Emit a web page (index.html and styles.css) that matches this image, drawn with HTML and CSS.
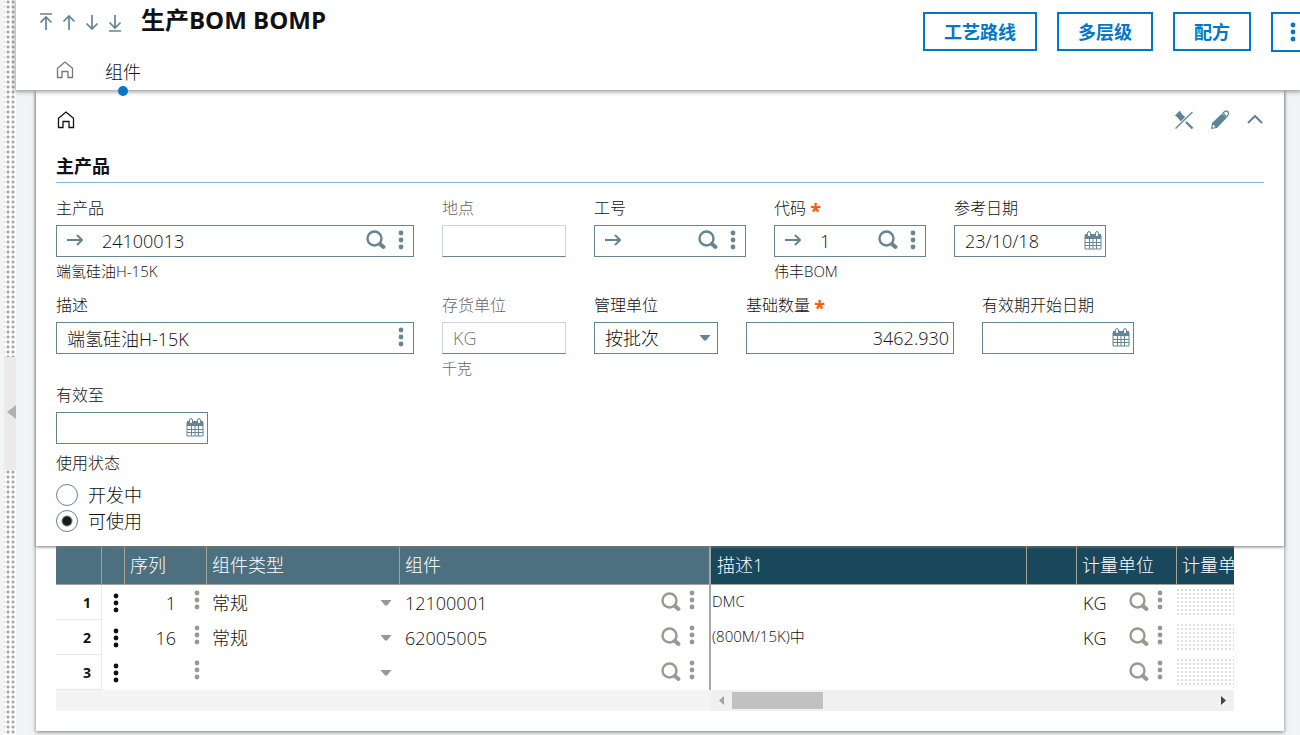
FILE: index.html
```html
<!DOCTYPE html>
<html lang="zh-CN">
<head>
<meta charset="utf-8">
<title>生产BOM BOMP</title>
<link rel="stylesheet" href="styles.css">
</head>
<body>
<svg class="sprite" aria-hidden="true">
  <symbol id="dots" viewBox="0 0 6 20"><circle cx="3" cy="3" r="2.4"/><circle cx="3" cy="10" r="2.4"/><circle cx="3" cy="17" r="2.4"/></symbol>
  <symbol id="search" viewBox="0 0 20 20"><circle cx="8.5" cy="8.5" r="7" fill="none" stroke="currentColor" stroke-width="2.4"/><path d="M14 14l3.4 3" stroke="currentColor" stroke-width="4" stroke-linecap="round"/></symbol>
  <symbol id="go" viewBox="0 0 16 12"><path d="M0 6h15M10 1l5 5-5 5" fill="none" stroke="currentColor" stroke-width="2"/></symbol>
  <symbol id="calendar" viewBox="0 0 18 19"><path d="M1 4.500h16v13.500H1z" fill="none" stroke="currentColor"/><path d="M1 3h16v5H1z"/><path d="M1 11.500h16M1 14.500h16M5.500 8v10M9 8v10M12.500 8v10" stroke="currentColor" fill="none"/><rect x="3.500" y=".6" width="3" height="5" rx="1.500" fill="#fff" stroke="currentColor"/><rect x="11.500" y=".6" width="3" height="5" rx="1.500" fill="#fff" stroke="currentColor"/></symbol>
  <symbol id="home" viewBox="0 0 18 18"><path d="M1.500 7.200L9 1l7.500 6.200v9.300h-4.500v-6H6v6H1.500z" fill="none" stroke="currentColor" stroke-width="1.300"/></symbol>
  <symbol id="caret" viewBox="0 0 12 6"><path d="M.5 0h11L7 5.500H5z"/></symbol>
</svg>
<div class="app">
  <aside class="splitter"><button class="collapse" aria-label="收起"><svg width="9" height="14" viewBox="0 0 9 14"><path d="M9 0v14L0 7z"/></svg></button></aside>
  <main class="main">
    <header class="header">
      <div class="heading">
        <nav class="pager">
          <button aria-label="首条"><svg width="14" height="20" viewBox="0 0 14 20"><path d="M1 2h12M7 18V5M1.500 10.500L7 5l5.500 5.500"/></svg></button>
          <button aria-label="上一条"><svg width="14" height="20" viewBox="0 0 14 20"><path d="M7 18V4M1.500 9.500L7 4l5.500 5.500"/></svg></button>
          <button aria-label="下一条"><svg width="14" height="20" viewBox="0 0 14 20"><path d="M7 3v14M1.500 11.500L7 17l5.500-5.500"/></svg></button>
          <button aria-label="末条"><svg width="14" height="20" viewBox="0 0 14 20"><path d="M1 19h12M7 3v13M1.500 10.500L7 16l5.500-5.500"/></svg></button>
        </nav>
        <h1>生产BOM BOMP</h1>
      </div>
      <div class="actions">
        <button>工艺路线</button><button>多层级</button><button>配方</button>
        <button class="more" aria-label="更多"><svg class="dots"><use href="#dots"/></svg></button>
      </div>
      <nav class="tabs">
        <a class="tab home" href="#" aria-label="主页"><svg width="18" height="18"><use href="#home"/></svg></a>
        <a class="tab active" href="#">组件</a>
      </nav>
    </header>
    <section class="card">
      <div class="panel">
        <div class="panel-top">
          <svg width="18" height="18"><use href="#home"/></svg>
          <div class="tools">
            <button aria-label="取消固定"><svg width="20" height="20" viewBox="0 0 20 20"><path d="M1 5.500L6 .5l1 2.500 5 5-1 3-3 2-4.500-5.500z"/><path d="M12 12l6.500 6.500" stroke="currentColor" stroke-width="2.4"/><path d="M1.500 18.500L18.500 2" stroke="#fff" stroke-width="3"/><path d="M1.500 18.500L18.500 2" stroke="currentColor" stroke-width="1.300"/></svg></button>
            <button aria-label="编辑"><svg width="20" height="20" viewBox="0 0 20 20"><path d="M1 19l1-6L12 3.500l4.500 4.500L7 18z"/><path d="M3 14.500L5.500 17l-3 .7z" fill="#fff"/><path d="M13 3l2-1.700q1.500-.8 2.800.5 1.200 1.300.4 2.700L16.500 7z" fill="#fff" stroke="currentColor" stroke-width="1.300"/></svg></button>
            <button aria-label="折叠"><svg width="18" height="20" viewBox="0 0 18 20"><path d="M2 13l7-7 7 7" fill="none" stroke="currentColor" stroke-width="2"/></svg></button>
          </div>
        </div>
        <h2>主产品</h2>
        <div class="row first">
          <div class="field w-xl"><label for="product">主产品</label>
            <div class="box"><button class="go" aria-label="跳转"><svg><use href="#go"/></svg></button><input id="product" value="24100013"><button aria-label="查找"><svg class="search"><use href="#search"/></svg></button><button aria-label="菜单"><svg class="dots"><use href="#dots"/></svg></button></div>
            <p class="hint">端氢硅油H-15K</p></div>
          <div class="field w-s off"><label for="site">地点</label><div class="box"><input id="site" disabled></div></div>
          <div class="field w-m"><label for="job">工号</label>
            <div class="box"><button class="go" aria-label="跳转"><svg><use href="#go"/></svg></button><input id="job"><button aria-label="查找"><svg class="search"><use href="#search"/></svg></button><button aria-label="菜单"><svg class="dots"><use href="#dots"/></svg></button></div></div>
          <div class="field w-m"><label for="code">代码 <b>*</b></label>
            <div class="box"><button class="go" aria-label="跳转"><svg><use href="#go"/></svg></button><input id="code" value="1"><button aria-label="查找"><svg class="search"><use href="#search"/></svg></button><button aria-label="菜单"><svg class="dots"><use href="#dots"/></svg></button></div>
            <p class="hint">伟丰BOM</p></div>
          <div class="field w-m"><label for="refdate">参考日期</label><div class="box date"><input id="refdate" value="23/10/18"><button aria-label="日历"><svg class="cal"><use href="#calendar"/></svg></button></div></div>
        </div>
        <div class="row second">
          <div class="field w-xl"><label for="desc">描述</label><div class="box"><input id="desc" value="端氢硅油H-15K"><button aria-label="菜单"><svg class="dots"><use href="#dots"/></svg></button></div></div>
          <div class="field w-s off"><label for="unit">存货单位</label><div class="box"><input id="unit" value="KG" disabled></div><p class="hint">千克</p></div>
          <div class="field w-s"><label for="manage">管理单位</label><div class="box select"><select id="manage"><option>按批次</option></select><svg class="caret"><use href="#caret"/></svg></div></div>
          <div class="field w-l"><label for="qty">基础数量 <b>*</b></label><div class="box"><input id="qty" class="num" value="3462.930"></div></div>
          <div class="field w-m"><label for="start">有效期开始日期</label><div class="box date"><input id="start"><button aria-label="日历"><svg class="cal"><use href="#calendar"/></svg></button></div></div>
        </div>
        <div class="row">
          <div class="field w-m"><label for="end">有效至</label><div class="box date"><input id="end"><button aria-label="日历"><svg class="cal"><use href="#calendar"/></svg></button></div></div>
        </div>
        <fieldset class="status">
          <legend>使用状态</legend>
          <label><input type="radio" name="status">开发中</label>
          <label><input type="radio" name="status" checked>可使用</label>
        </fieldset>
      </div>
      <div class="grid">
        <table>
          <colgroup><col class="c-no"><col class="c-menu"><col class="c-seq"><col class="c-type"><col class="c-comp"><col><col class="c-gap"><col class="c-unit"><col class="c-last"></colgroup>
          <thead><tr><th></th><th></th><th>序列</th><th>组件类型</th><th class="pin">组件</th><th class="dark">描述1</th><th class="dark"></th><th class="dark">计量单位</th><th class="dark">计量单位</th></tr></thead>
          <tbody>
            <tr><td class="no">1</td><td class="menu"><svg class="dots"><use href="#dots"/></svg></td><td><div class="cell seq"><span>1</span><svg class="dots"><use href="#dots"/></svg></div></td><td><div class="cell type"><span>常规</span><svg class="caret"><use href="#caret"/></svg></div></td><td class="pin"><div class="cell"><span>12100001</span><svg class="search"><use href="#search"/></svg><svg class="dots"><use href="#dots"/></svg></div></td><td class="desc">DMC</td><td></td><td><div class="cell unit"><span>KG</span><svg class="search"><use href="#search"/></svg><svg class="dots"><use href="#dots"/></svg></div></td><td><div class="locked">1</div></td></tr>
            <tr><td class="no">2</td><td class="menu"><svg class="dots"><use href="#dots"/></svg></td><td><div class="cell seq"><span>16</span><svg class="dots"><use href="#dots"/></svg></div></td><td><div class="cell type"><span>常规</span><svg class="caret"><use href="#caret"/></svg></div></td><td class="pin"><div class="cell"><span>62005005</span><svg class="search"><use href="#search"/></svg><svg class="dots"><use href="#dots"/></svg></div></td><td class="desc">(800M/15K)中</td><td></td><td><div class="cell unit"><span>KG</span><svg class="search"><use href="#search"/></svg><svg class="dots"><use href="#dots"/></svg></div></td><td><div class="locked">1</div></td></tr>
            <tr><td class="no">3</td><td class="menu"><svg class="dots"><use href="#dots"/></svg></td><td><div class="cell seq"><span></span><svg class="dots"><use href="#dots"/></svg></div></td><td><div class="cell type"><span></span><svg class="caret"><use href="#caret"/></svg></div></td><td class="pin"><div class="cell"><span></span><svg class="search"><use href="#search"/></svg><svg class="dots"><use href="#dots"/></svg></div></td><td class="desc"></td><td></td><td><div class="cell unit"><span></span><svg class="search"><use href="#search"/></svg><svg class="dots"><use href="#dots"/></svg></div></td><td><div class="locked"></div></td></tr>
          </tbody>
        </table>
        <div class="scroll"><div class="track">
          <button class="prev" aria-label="向左滚动"><svg width="5" height="9" viewBox="0 0 5 9"><path d="M5 0v9L0 4.500z"/></svg></button><div class="thumb"></div><button class="next" aria-label="向右滚动"><svg width="5" height="9" viewBox="0 0 5 9"><path d="M0 0v9l5-4.500z"/></svg></button>
        </div></div>
      </div>
    </section>
  </main>
</div>
</body>
</html>
```
FILE: styles.css
```css
* { box-sizing: border-box; }
body {
  margin: 0;
  background: #f1f5f6;
  color: #111;
  font: 300 18px/24px "Open Sans", "Noto Sans CJK SC", sans-serif;
  overflow: hidden;
}
button, input, select { font: inherit; color: inherit; border: 0; padding: 0; margin: 0; background: none; }
button { display: flex; align-items: center; justify-content: center; flex: none; }
svg { display: block; fill: currentColor; flex: none; }
h1, h2, p { margin: 0; }
.sprite { position: absolute; width: 0; height: 0; }
.dots { width: 6px; height: 20px; }
.search { width: 20px; height: 20px; }
.caret { width: 12px; height: 6px; }
.cal { width: 18px; height: 19px; }

.app { display: flex; min-height: 100vh; }
.splitter {
  flex: none;
  width: 12px;
  margin-left: 4px;
  display: flex;
  flex-direction: column;
  padding-top: 357px;
  background: #fff radial-gradient(circle at 3px 2px, #a6a6a6 1px, transparent 2px) 1px 0 / 5px 5px;
}
.collapse { width: 12px; height: 113px; padding-bottom: 3px; background: #ebeae8; color: #b0b0b0; justify-content: flex-end; }
.main { flex: 1; min-width: 0; }

.header {
  position: relative;
  z-index: 2;
  display: flex;
  flex-wrap: wrap;
  justify-content: space-between;
  padding-left: 20px;
  background: #fff;
  box-shadow: 0 1px 4px 1px #888c;
}
.heading { display: flex; height: 54px; }
.pager { display: flex; gap: 9px; padding: 10px 0 0 3px; height: 33px; color: #5f8594; }
.pager path { fill: none; stroke: currentColor; stroke-width: 1.700; }
h1 { margin-left: 19px; padding-top: 4px; font-size: 24px; line-height: 32px; font-weight: 700; }
.actions { display: flex; gap: 20px; padding-top: 12px; margin-right: -14px; }
.actions button { height: 39px; padding: 0 19px; border: 2px solid #0077c8; color: #0077c8; background: #fff; font-weight: 700; }
.actions .more { width: 43px; height: 40px; padding: 0; }
.tabs { flex-basis: 100%; display: flex; height: 36px; padding-left: 20px; gap: 31px; }
.tab { color: #111; text-decoration: none; height: 36px; padding-top: 6px; }
.tab.home { color: #777; padding-top: 7px; }
.active::after { content: ""; display: block; width: 10px; height: 10px; margin: 2px auto 0; border-radius: 50%; background: #0077c8; }

.card { margin: 0 16px 0 20px; background: #fff; box-shadow: 0 1px 4px #777; padding-bottom: 20px; }
.panel { position: relative; z-index: 1; padding: 20px 20px 12px; background: #fff; box-shadow: 0 1px 3px #777; }
.panel-top { display: flex; justify-content: space-between; height: 44px; }
.panel-top > svg { margin: 1px 0 0 1px; }
.tools { display: flex; gap: 16px; color: #5f8594; height: 20px; }
h2 { height: 29px; font-size: 18px; line-height: 24px; font-weight: 700; border-bottom: 1px solid #7fb9df; }
.row { display: flex; flex-wrap: wrap; gap: 0 28px; }
.first { padding-top: 13px; min-height: 106px; }
.second { padding-top: 4px; min-height: 94px; }
.field { padding-bottom: 4px; }
.field > label { display: block; height: 29px; padding-top: 1px; font-size: 16px; line-height: 22px; }
.field b { color: #ff5a00; font-size: 20px; font-weight: 700; line-height: 16px; vertical-align: -4px; }
.w-xl { width: 358px; }
.w-l { width: 208px; }
.w-m { width: 152px; }
.w-s { width: 124px; }
.box { display: flex; align-items: center; gap: 12px; height: 32px; padding-right: 9px; border: 1px solid #668593; color: #668593; }
.box input, .box select { flex: 1; min-width: 0; height: 30px; padding: 0 0 0 10px; color: #111; outline: 0; }
.box input { width: 0; }
.box button svg { margin-bottom: 2px; }
.box .go { padding-left: 10px; margin-right: -3px; }
.go svg { width: 16px; height: 12px; }
.box.date { padding-right: 3px; }
.box .num { text-align: right; margin-right: -5px; }
.box.select { padding-right: 6px; gap: 0; }
.box select { appearance: none; }
.off label, .off .hint { color: #666; }
.off .box { border-color: #ccd6da #ccd6da #668593; }
.box input:disabled { color: #777; }
.hint { padding-top: 3px; font-size: 15px; line-height: 22px; }
.status { border: 0; margin: 0; padding: 0; }
.status legend { height: 34px; padding: 4px 0 0; font-size: 16px; line-height: 22px; }
.status label { display: flex; align-items: center; gap: 10px; height: 26px; }
.status input { appearance: none; width: 22px; height: 22px; border: 1px solid #668593; border-radius: 50%; }
.status input:checked { background: radial-gradient(circle, #1a1a1a 4px, transparent 6px); }

.grid { margin: 0 50px 0 20px; }
table { width: 100%; table-layout: fixed; border-collapse: separate; border-spacing: 0; }
.c-no { width: 46px; }
.c-menu { width: 23px; }
.c-seq { width: 82px; }
.c-type { width: 193px; }
.c-comp { width: 311px; }
.c-gap { width: 50px; }
.c-unit { width: 100px; }
.c-last { width: 57px; }
th { height: 39px; padding: 0 0 0 5px; text-align: left; font-weight: 300; color: #fff; background: #4d7080; border: 0 solid #a5a598; border-width: 0 1px 1px 0; white-space: nowrap; overflow: hidden; }
.dark { background: #19475c; }
.dark:last-child { border-right: 0; }
.pin { border-right: 2px solid #a6a6a6; }
.pin + .dark { padding-left: 6px; }
td { height: 35px; padding: 0; overflow: hidden; white-space: nowrap; }
.no { padding: 2px 10px 0 0; text-align: right; font-size: 14px; font-weight: 700; border-right: 1px solid #e8e8e8; border-bottom: 1px solid #e8e8e8; }
.menu svg { margin: 0 auto 0 11px; }
.cell { display: flex; align-items: center; height: 35px; padding: 0 14px 0 5px; color: #999990; }
.cell span { flex: 1; padding-top: 1px; color: #111; }
.cell .dots { margin: 0 0 5px 8px; }
.cell .search { margin-bottom: 1px; }
.cell.seq { padding-right: 7px; }
.seq span { text-align: right; }
.cell.seq .dots { margin-left: 18px; }
.cell.type { padding-right: 8px; }
.cell.unit { padding: 0 14px 0 6px; }
.desc { font-size: 15px; padding: 0 0 3px 1px; }
.locked { height: 28px; padding-left: 55px; background: radial-gradient(circle at 1px 1px, #ddd 1px, transparent 1px) 0 0 / 4px 4px; overflow: hidden; }
.scroll { display: flex; justify-content: flex-end; height: 21px; background: #f4f4f4; }
.track { width: calc(100% - 655px); display: flex; align-items: center; padding: 0 8px; background: #f0f0f0; }
.thumb { width: 91px; height: 17px; margin-left: 8px; background: #c1c1c1; }
.prev { color: #a3a3a3; }
.next { margin-left: auto; color: #444; }
```
